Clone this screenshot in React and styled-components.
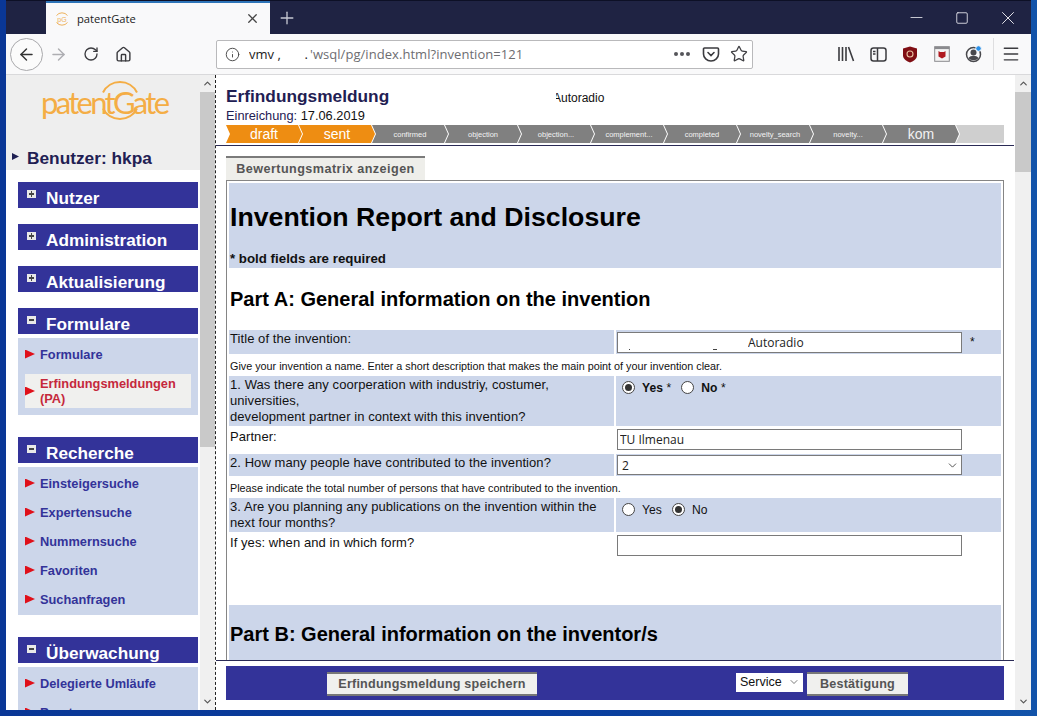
import React from 'react';
import styled, { createGlobalStyle } from 'styled-components';
import { ArrowLeft, ArrowRight, RotateCw, Home, Info, Star, Menu, Plus, X, Minus, Square, ChevronUp, ChevronDown } from 'lucide-react';

const Global = createGlobalStyle`
  html, body { margin: 0; padding: 0; overflow: hidden; }
  body { font-family: "Liberation Sans", Arial, sans-serif; background: #0b3f9f; }
  * { box-sizing: border-box; }
`;

const Desktop = styled.div`
  width: 1037px; height: 716px; padding: 0 6px 6px;
  background: linear-gradient(90deg, #0a3796 0%, #0a3f9e 60%, #1253a9 100%);
`;
const Win = styled.div`display: flex; flex-direction: column; width: 1025px; height: 710px; background: #fff; overflow: hidden;`;
const TitleBar = styled.div`
  height: 34px; flex: none; display: flex; align-items: stretch; padding-left: 40px;
  background: #1f2343; border-top: 1px solid #0d1026; color: #fff;
`;
const Tab = styled.div`
  width: 224px; display: flex; align-items: center; gap: 7px; padding: 0 10px 0 8px;
  background: #f9f9fa; border-top: 2px solid #2d74b8; color: #222; font-size: 11.2px;
  font-family: "Open Sans", sans-serif;
`;
const TabName = styled.span`flex: 1;`;
const NewTab = styled.div`width: 34px; display: flex; align-items: center; justify-content: center; color: #c6c8d2;`;
const Spacer = styled.div`flex: 1;`;
const WinCtl = styled.div`width: 46px; display: flex; align-items: center; justify-content: center; color: #f2f2f6;`;

const ToolBar = styled.div`
  height: 41px; flex: none; display: flex; align-items: center; background: #f9f9fa;
  border-bottom: 1px solid #d9d9db; color: #3b3b3f; padding-left: 4px;
`;
const BackBtn = styled.div`
  width: 33px; height: 33px; border-radius: 50%; border: 1px solid #a9a9ac; background: #fbfbfb;
  display: flex; align-items: center; justify-content: center; color: #333;
`;
const ToolBtn = styled.div`
  width: ${p => p.$w || 32}px; margin-left: ${p => p.$ml || 0}px; display: flex; align-items: center; justify-content: center;
  color: ${p => p.$muted ? '#aeaeb2' : '#3b3b3f'};
`;
const UrlBox = styled.div`
  width: 537px; height: 29px; margin: 0 77px 0 77px; display: flex; align-items: center;
  background: #fff; border: 1px solid #b9b9bb; border-radius: 2px; padding: 0 0 0 8px; flex: none;
`;
const UrlHost = styled.span`margin-left: 9px; font: 13px "Open Sans", sans-serif; color: #222; width: 61px; flex: none; white-space: pre; overflow: hidden;`;
const UrlPath = styled.span`font: 13px "Open Sans", sans-serif; color: #6d6d71; flex: 1; white-space: nowrap; letter-spacing: .05px;`;
const UrlIcon = styled.div`width: ${p => p.$w || 29}px; display: flex; align-items: center; justify-content: center; color: #3f3f43;`;
const Dots = styled.div`display: flex; gap: 2px; span { width: 4px; height: 4px; border-radius: 50%; background: #55555a; }`;
const ToolDivider = styled.div`width: 1px; height: 32px; background: #dedee0; margin: 0 1px 0 3px;`;

const Page = styled.div`flex: 1; min-height: 0; display: flex;`;
const Sidebar = styled.aside`width: 194px; flex: none; overflow: hidden; background: #fff;`;
const SideHead = styled.div`height: 95px; background: #eeeeee; display: flex; flex-direction: column;`;
const Logo = styled.div`
  position: relative; width: 125px; height: 42px; margin: 6px 0 0 35px; color: #f4ad45;
  font: 400 31px/42px Lato, sans-serif; white-space: nowrap; letter-spacing: -2.7px;
`;
const LogoArcs = styled.svg`position: absolute; left: 57px; top: 0; width: 44px; height: 42px; overflow: visible;`;
const User = styled.div`
  margin-top: 25px; padding-left: 6px; display: flex; align-items: center; gap: 8px;
  color: #1f2053; font-weight: 700; font-size: 17.3px; line-height: 20px;
`;
const UserMark = styled.i`width: 7px; height: 7px; margin-top: -3px; background: #1f2053; clip-path: polygon(0 0, 100% 50%, 0 100%);`;
const Nav = styled.nav`padding: 12px 2px 0 12px;`;
const Group = styled.section`margin-bottom: ${p => p.$gap}px;`;
const GroupHead = styled.h3`
  margin: 0; height: 26px; background: #333399; color: #fff; display: flex; font-size: 17.2px;
  font-weight: 700; line-height: 18px; padding: 7px 0 0 9px; overflow: hidden;
`;
const Toggle = styled.i`
  width: 9px; height: 8px; margin: 1px 10px 0 0; flex: none; position: relative; background: #e8e8e8;
  &::before { content: ""; position: absolute; left: 2px; right: 2px; top: 3px; height: 2px; background: #444; }
  ${p => p.$plus && `&::after { content: ""; position: absolute; top: 1px; bottom: 1px; left: 4px; width: 1px; background: #444; }`}
`;
const GroupName = styled.span``;
const SubList = styled.ul`list-style: none; margin: 4px 0 0; padding: 5px 7px; background: #ccd6ea; display: flex; flex-direction: column; gap: 7px;`;
const SubItem = styled.li`
  display: flex; align-items: center; gap: 5px; min-height: ${p => p.$active ? 34 : 22}px; font-size: 12.8px; font-weight: 700;
  line-height: 15px; color: ${p => p.$active ? '#c5283c' : '#333399'}; background: ${p => p.$active ? '#f0f0ee' : 'transparent'};
  margin: ${p => p.$active ? '2px 0' : 0};
`;
const Bullet = styled.i`width: 10px; height: 9px; flex: none; background: #e0101a; clip-path: polygon(0 0, 100% 50%, 0 100%);`;

const Track = styled.div`width: ${p => p.$w}px; flex: none; background: #f0f0f0; display: flex; flex-direction: column; color: #555;`;
const TrackBtn = styled.div`height: 17px; flex: none; display: flex; align-items: center; justify-content: center;`;
const TrackBody = styled.div`flex: 1;`;
const Thumb = styled.div`height: ${p => p.$h}px; background: #c9c9c9;`;
const Dotted = styled.div`width: 1px; flex: none; border-left: 1px dashed #222;`;

const Main = styled.main`flex: 1; min-width: 0; margin-right: 1px; display: flex; flex-direction: column;`;
const DocHead = styled.header`height: 71px; flex: none; padding: 12px 10px 0; border-bottom: 1px solid #2a2a55;`;
const HeadRow = styled.div`display: flex; align-items: baseline; height: 19px;`;
const DocTitle = styled.h1`margin: 0; width: 327px; color: #1f2053; font-size: 17.3px; font-weight: 700; line-height: 19px;`;
const DocName = styled.span`
  position: relative; font-size: 12px; color: #111;
  &::before { content: ""; position: absolute; left: -1px; top: 0; bottom: 0; width: 4px; background: #fff; }
`;
const Submitted = styled.div`font-size: 12.8px; line-height: 14px; margin-top: 3px; color: #1f2053; span { color: #111; }`;
const Steps = styled.div`display: flex; height: 18px; margin-top: 2px;`;
const Step = styled.div`
  width: 76px; margin-right: -3px; flex: none; display: flex; align-items: center; justify-content: center;
  background: ${p => p.$on ? '#ee8d12' : '#808080'}; color: ${p => p.$on ? '#fff' : '#f2f2f2'};
  font-size: ${p => p.$big ? 14 : 7.5}px;
  clip-path: polygon(0 0, calc(100% - 4px) 0, 100% 50%, calc(100% - 4px) 100%, 0 100%, 4px 50%);
`;
const StepRest = styled.div`
  flex: 1; background: #cfcfcf;
  clip-path: polygon(0 0, 100% 0, 100% 100%, 0 100%, 4px 50%);
`;

const Scroll = styled.div`flex: 1; min-height: 0; overflow: hidden; padding: 10px 10px 0;`;
const MatrixTab = styled.div`
  width: 199px; height: 24px; background: #eeeeea; border-top: 2px solid #7b7b7b;
  color: #555; font-size: 12.6px; font-weight: 700; letter-spacing: .45px; line-height: 22px; text-align: center;
`;
const Frame = styled.div`border: 1px solid #858585; padding: 2px 2px 0; height: 900px;`;
const Intro = styled.div`background: #ccd6ea; height: 85px; padding: 0 1px;`;
const H1 = styled.h2`margin: 0; padding-top: 18px; font-size: 26.7px; line-height: 32px; color: #000;`;
const Req = styled.p`margin: 19px 0 0; font-size: 13.3px; font-weight: 700; line-height: 14px; color: #111;`;
const PartA = styled.h2`margin: 0; height: 62px; padding: 20px 1px 0; font-size: 20px; line-height: 23px; color: #000;`;
const Row = styled.div`display: grid; grid-template-columns: 385px 385px; column-gap: 2px; height: ${p => p.$h}px;`;
const Cell = styled.div`
  position: relative; background: ${p => p.$fill ? '#ccd6ea' : 'transparent'}; padding: ${p => p.$pad ?? 1}px 1px 0;
  font-size: 13px; line-height: 16px; color: #111; display: flex; align-items: flex-start; letter-spacing: .07px;
`;
const Label = styled.div``;
const Hint = styled.div`height: 22px; padding: 5px 1px 0; font-size: 10.81px; line-height: 14px; color: #111; white-space: nowrap;`;
const TextInput = styled.input`
  width: 345px; height: 21px; margin-left: 0; border: 1px solid #7a7a7a; background: #fff; padding: 0 0 0 ${p => p.$indent || 2}px; flex: none;
  font: 12px "Open Sans", "DejaVu Sans", sans-serif; color: #222; border-radius: 0; outline: 0;
`;
const Smudge = styled.i`position: absolute; bottom: 4px; left: ${p => p.$x}px; width: ${p => p.$w}px; height: 1px; background: #444;`;
const Star2 = styled.span`margin: 2px 0 0 8px; font-size: 12.1px;`;
const SelectBox = styled.div`
  width: 345px; height: 20px; border: 1px solid #7a7a7a; background: #fff; display: flex; align-items: center;
  justify-content: space-between; padding: 0 2px 0 4px; font: 12px "Open Sans", sans-serif; color: #222; flex: none;
`;
const Radios = styled.div`display: flex; align-items: center; padding: 3px 0 0 5px; font-size: 12.1px; font-weight: ${p => p.$bold ? 700 : 400};`;
const Radio = styled.input.attrs({ type: 'radio', readOnly: true })`
  appearance: none; width: 13px; height: 13px; margin: 0 7px 0 0; border: 1px solid #444; border-radius: 50%; background: #fff; position: relative; flex: none;
  &:checked::after { content: ""; position: absolute; inset: 2px; border-radius: 50%; background: #333; }
`;
const RadioText = styled.label`position: relative; top: 1px; margin-right: 10px; b { font-weight: 400; }`;
const Gap = styled.div`height: 48px;`;
const PartB = styled.div`background: #ccd6ea; height: 60px; padding: 17px 1px 0; font-size: 20px; font-weight: 700; line-height: 24px; color: #000;`;

const Footer = styled.footer`height: 50px; flex: none; border-top: 1px solid #2a2a55; padding: 5px 10px 10px;`;
const Bar = styled.div`height: 34px; background: #333399; display: flex; align-items: center; padding-left: 101px;`;
const Btn = styled.button`
  width: ${p => p.$w}px; height: 24px; border: 0; border-top: 2px solid #777; border-bottom: 2px solid #777; background: #f0f0ee; color: #555;
  font: 700 12.6px "Liberation Sans", sans-serif; letter-spacing: .2px; padding: 0; border-radius: 0; margin-top: 1px;
`;
const Service = styled.div`
  width: 69px; height: 21px; margin: 0 3px 2px 198px; background: #fff; color: #111; font-size: 12.5px; border: 1px solid #333399;
  display: flex; align-items: center; justify-content: space-between; padding: 0 3px 0 4px;
`;

const PocketIcon = () => (
  <svg width="18" height="18" viewBox="0 0 18 18" fill="none" stroke="#3b3b3f" strokeWidth="1.6">
    <path d="M2.5 3h13a1 1 0 0 1 1 1v5a7.5 7 0 0 1-15 0V4a1 1 0 0 1 1-1z" />
    <path d="M6 7.5l3 3 3-3" strokeLinecap="round" />
  </svg>
);
const LibraryIcon = () => (
  <svg width="18" height="16" viewBox="0 0 18 16" fill="none" stroke="#3b3b3f" strokeWidth="1.6">
    <path d="M2 1v14M5.5 1v14M9 1v14M11.5 1l5 14" />
  </svg>
);
const SideIcon = () => (
  <svg width="17" height="15" viewBox="0 0 17 15" fill="none" stroke="#3b3b3f" strokeWidth="1.5">
    <rect x="1" y="1" width="15" height="13" rx="2.5" />
    <path d="M7.5 1v13M3 4.5h2.5M3 7h2.5" />
  </svg>
);
const ShieldIcon = () => (
  <svg width="16" height="17" viewBox="0 0 16 17">
    <path d="M1 2.5L8 .5l7 2v7c0 3.5-4 6-7 7-3-1-7-3.500-7-7z" fill="#800f14" />
    <circle cx="8" cy="8" r="3" fill="none" stroke="#e8c0a0" strokeWidth="1.1" />
  </svg>
);
const CalIcon = () => (
  <svg width="16" height="16" viewBox="0 0 16 16">
    <rect x=".7" y=".7" width="14.6" height="14.600" fill="#f4f4f4" stroke="#8a8a8e" />
    <rect x=".7" y=".7" width="14.6" height="2.400" fill="#8a8a8e" />
    <path d="M4.500 5l1.500 1h4l1.500-1v5.500L8 12.500l-3.500-2z" fill="#b01a20" />
  </svg>
);
const AccountIcon = () => (
  <svg width="18" height="18" viewBox="0 0 18 18">
    <circle cx="8.500" cy="9.500" r="7" fill="none" stroke="#48484c" strokeWidth="1.500" />
    <circle cx="8.500" cy="7.500" r="3" fill="#48484c" />
    <path d="M3.500 13c2-3 8-3 10 0-2 3-8 3-10 0z" fill="#48484c" />
    <circle cx="13.500" cy="3.500" r="2.800" fill="#2a90e8" stroke="#f9f9fa" />
  </svg>
);
const Favicon = () => (
  <svg width="16" height="16" viewBox="0 0 16 16" fill="none" stroke="#eeb25c" strokeWidth="1">
    <path d="M2.500 4.500A7 7 0 0 1 13.500 4.500M13.500 11.500A7 7 0 0 1 2.500 11.500" />
    <text x="8" y="10.500" textAnchor="middle" fontSize="7" fill="#eeb25c" stroke="none" fontFamily="Liberation Sans">pG</text>
  </svg>
);

const Scrollbar = ({ w, thumb }) => (
  <Track $w={w}>
    <TrackBtn><ChevronUp size={11} strokeWidth={2.6} /></TrackBtn>
    <Thumb $h={thumb} />
    <TrackBody />
    <TrackBtn><ChevronDown size={11} strokeWidth={2.6} /></TrackBtn>
  </Track>
);

const groups = [
  { name: 'Nutzer', gap: 16 },
  { name: 'Administration', gap: 16 },
  { name: 'Aktualisierung', gap: 16 },
  { name: 'Formulare', gap: 22, items: [['Formulare'], ['Erfindungsmeldungen (PA)', true]] },
  { name: 'Recherche', gap: 22, items: [['Einsteigersuche'], ['Expertensuche'], ['Nummernsuche'], ['Favoriten'], ['Suchanfragen']] },
  { name: 'Überwachung', gap: 0, items: [['Delegierte Umläufe'], ['Berater']] },
];
const steps = [
  ['draft', 1, 1], ['sent', 1, 1], ['confirmed'], ['objection'], ['objection...'], ['complement...'],
  ['completed'], ['novelty_search'], ['novelty...'], ['kom', 0, 1],
];

export default function App() {
  return (
    <Desktop>
      <Global />
      <Win>
        <TitleBar>
          <Tab>
            <Favicon />
            <TabName>patentGate</TabName>
            <X size={15} color="#444" />
          </Tab>
          <NewTab><Plus size={20} strokeWidth={1.6} /></NewTab>
          <Spacer />
          <WinCtl><Minus size={19} strokeWidth={1} /></WinCtl>
          <WinCtl><Square size={14} strokeWidth={1.4} /></WinCtl>
          <WinCtl><X size={22} strokeWidth={1} /></WinCtl>
        </TitleBar>
        <ToolBar>
          <BackBtn><ArrowLeft size={19} strokeWidth={1.8} /></BackBtn>
          <ToolBtn $muted $w={27} $ml={2}><ArrowRight size={19} strokeWidth={1.8} /></ToolBtn>
          <ToolBtn $ml={3}><RotateCw size={16} strokeWidth={2} /></ToolBtn>
          <ToolBtn><Home size={17} strokeWidth={2} /></ToolBtn>
          <UrlBox>
            <Info size={15} strokeWidth={1.5} color="#444" />
            <UrlHost>{'vmv ,       .'}</UrlHost>
            <UrlPath>'wsql/pg/index.html?invention=121</UrlPath>
            <UrlIcon><Dots><span /><span /><span /></Dots></UrlIcon>
            <UrlIcon><PocketIcon /></UrlIcon>
            <UrlIcon $w={27}><Star size={18} strokeWidth={1.7} /></UrlIcon>
          </UrlBox>
          <ToolBtn><LibraryIcon /></ToolBtn>
          <ToolBtn><SideIcon /></ToolBtn>
          <ToolBtn><ShieldIcon /></ToolBtn>
          <ToolBtn><CalIcon /></ToolBtn>
          <ToolBtn><AccountIcon /></ToolBtn>
          <ToolDivider />
          <ToolBtn><Menu size={20} strokeWidth={1.7} /></ToolBtn>
        </ToolBar>
        <Page>
          <Sidebar>
            <SideHead>
              <Logo>
                patentGate
                <LogoArcs viewBox="0 0 44 42" fill="none" stroke="#f4ad45" strokeWidth="2">
                  <path d="M5 11.500A19 19 0 0 1 39 11.500M39 27.500A19 19 0 0 1 5 27.500" />
                </LogoArcs>
              </Logo>
              <User><UserMark />Benutzer: hkpa</User>
            </SideHead>
            <Nav>
              {groups.map(g => (
                <Group key={g.name} $gap={g.gap}>
                  <GroupHead>
                    <Toggle $plus={!g.items} />
                    <GroupName>{g.name}</GroupName>
                  </GroupHead>
                  {g.items && (
                    <SubList>
                      {g.items.map(([t, active]) => (
                        <SubItem key={t} $active={active}><Bullet /><span>{t}</span></SubItem>
                      ))}
                    </SubList>
                  )}
                </Group>
              ))}
            </Nav>
          </Sidebar>
          <Scrollbar w={15} thumb={355} />
          <Dotted />
          <Main>
            <DocHead>
              <HeadRow>
                <DocTitle>Erfindungsmeldung</DocTitle>
                <DocName>Autoradio</DocName>
              </HeadRow>
              <Submitted>Einreichung: <span>17.06.2019</span></Submitted>
              <Steps>
                {steps.map(([t, on, big]) => <Step key={t} $on={on} $big={big}>{t}</Step>)}
                <StepRest />
              </Steps>
            </DocHead>
            <Scroll>
              <MatrixTab>Bewertungsmatrix anzeigen</MatrixTab>
              <Frame>
                <Intro>
                  <H1>Invention Report and Disclosure</H1>
                  <Req>* bold fields are required</Req>
                </Intro>
                <PartA>Part A: General information on the invention</PartA>
                <Row $h={24}>
                  <Cell $fill><Label>Title of the invention:</Label></Cell>
                  <Cell $fill $pad={2}>
                    <TextInput readOnly $indent={130} value="Autoradio" />
                    <Smudge $x={13} $w={1} />
                    <Smudge $x={97} $w={4} />
                    <Star2>*</Star2>
                  </Cell>
                </Row>
                <Hint>Give your invention a name. Enter a short description that makes the main point of your invention clear.</Hint>
                <Row $h={50}>
                  <Cell $fill><Label>1. Was there any coorperation with industriy, costumer,<br />universities,<br />development partner in context with this invention?</Label></Cell>
                  <Cell $fill $pad={0}>
                    <Radios $bold>
                      <Radio checked /><RadioText>Yes <b>*</b></RadioText>
                      <Radio /><RadioText>No <b>*</b></RadioText>
                    </Radios>
                  </Cell>
                </Row>
                <Row $h={28}>
                  <Cell $pad={3}><Label>Partner:</Label></Cell>
                  <Cell $pad={3}><TextInput readOnly value="TU Ilmenau" /></Cell>
                </Row>
                <Row $h={22}>
                  <Cell $fill><Label>2. How many people have contributed to the invention?</Label></Cell>
                  <Cell $fill>
                    <SelectBox>2<ChevronDown size={13} strokeWidth={1.4} color="#222" /></SelectBox>
                  </Cell>
                </Row>
                <Hint>Please indicate the total number of persons that have contributed to the invention.</Hint>
                <Row $h={34}>
                  <Cell $fill><Label>3. Are you planning any publications on the invention within the<br />next four months?</Label></Cell>
                  <Cell $fill $pad={0}>
                    <Radios>
                      <Radio /><RadioText>Yes</RadioText>
                      <Radio checked /><RadioText>No</RadioText>
                    </Radios>
                  </Cell>
                </Row>
                <Row $h={25}>
                  <Cell $pad={3}><Label>If yes: when and in which form?</Label></Cell>
                  <Cell $pad={3}><TextInput readOnly value="" /></Cell>
                </Row>
                <Gap />
                <PartB>Part B: General information on the inventor/s</PartB>
              </Frame>
            </Scroll>
            <Footer>
              <Bar>
                <Btn $w={210}>Erfindungsmeldung speichern</Btn>
                <Service>Service<ChevronDown size={12} strokeWidth={1.3} color="#333" /></Service>
                <Btn $w={101}>Bestätigung</Btn>
              </Bar>
            </Footer>
          </Main>
          <Scrollbar w={16} thumb={80} />
        </Page>
      </Win>
    </Desktop>
  );
}
